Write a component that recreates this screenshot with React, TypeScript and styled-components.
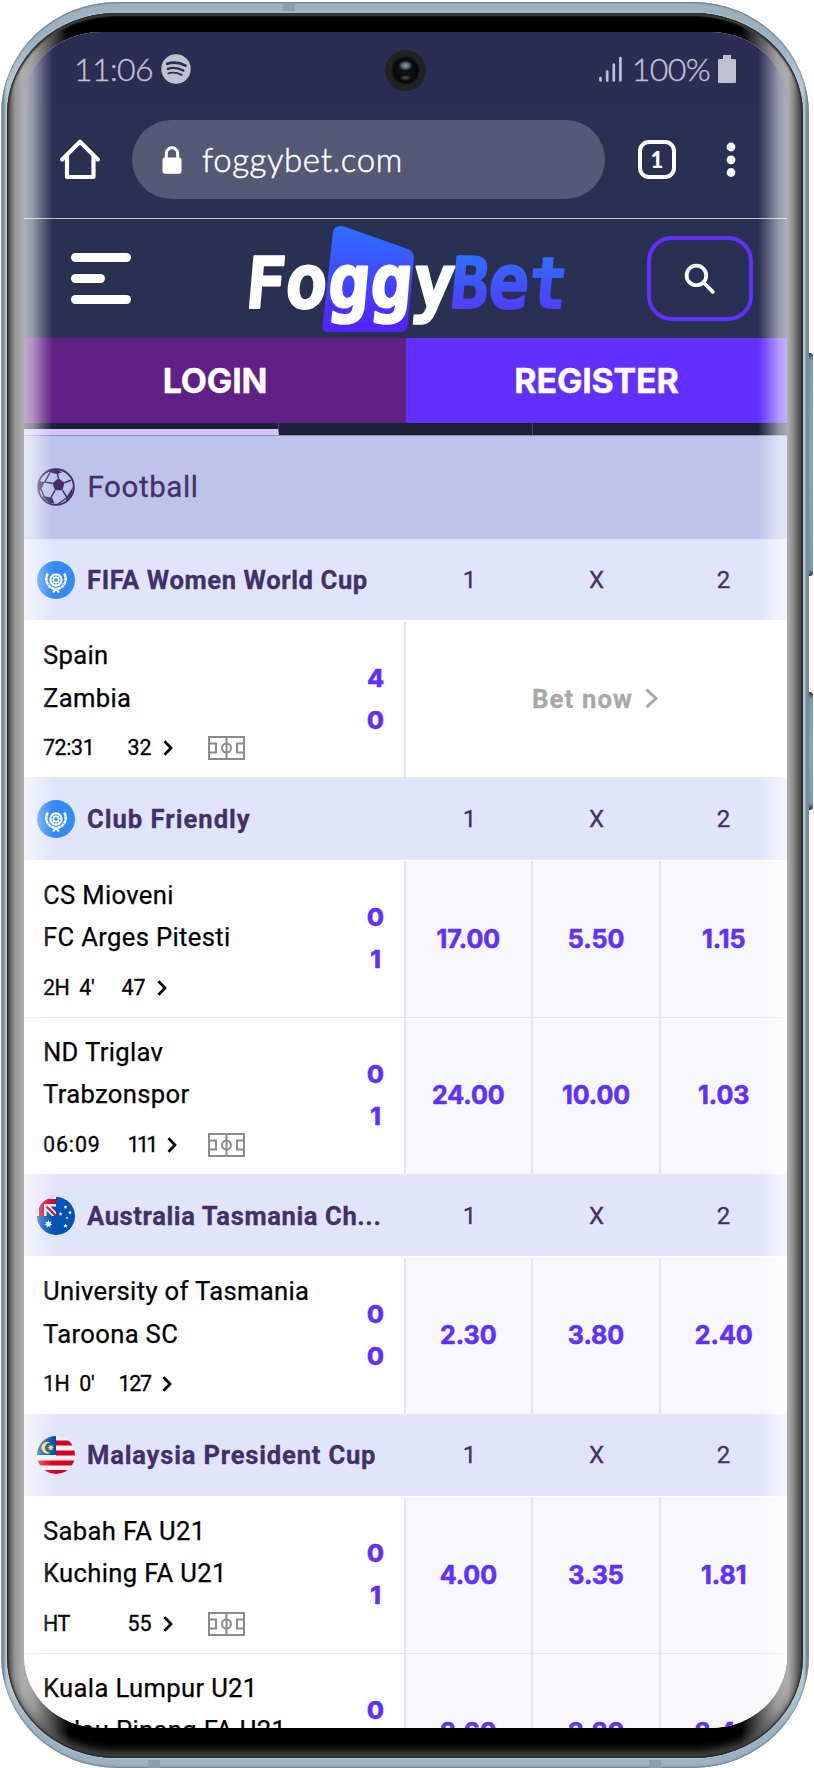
import React from "react";
import styled, { createGlobalStyle } from "styled-components";

const Global = createGlobalStyle`
  *, *::before, *::after { box-sizing: border-box; }
  html, body { margin: 0; padding: 0; background: #fff; }
  body { width: 814px; height: 1768px; overflow: hidden; }
  svg { display: block; flex: none; }
`;

const rubik = `Roboto, "Liberation Sans", sans-serif`;
const inter = `Inter, "Liberation Sans", sans-serif`;
const lato = `Lato, "Open Sans", sans-serif`;

/* ---------- phone body ---------- */

const Stage = styled.main`
  position: relative;
  width: 814px;
  height: 1768px;
  padding: 2px 0 0 1px;
  overflow: hidden;
`;

const Frame = styled.div`
  position: relative;
  width: 808px;
  height: 1766px;
  padding: 11px 6px 10px;
  border-radius: 116px / 112px;
  background: linear-gradient(90deg, #b9ced8 0, #6f8593 2px, #9db3c2 4px, #b4cad6 6px, #9db1bf 30px, #9db1bf 778px, #b4cad6 802px, #9fb7c6 804px, #708797 806px, #8c9aa3 808px);
  box-shadow: inset 0 1px 2px #6d7b86, inset 0 -1px 2px #6d7b86;
`;

const Bezel = styled.div`
  width: 796px;
  height: 1745px;
  padding: 19px 16px 30px 17px;
  border-radius: 109px / 101px;
  background: linear-gradient(90deg, #3c3c3c 0, #707070 4px, #989898 8px, #acacac 16px, #a0a0a0 26px, #5c5c5c 42px, #000 62px, #000 734px, #5c5c5c 754px, #a0a0a0 770px, #acacac 781px, #8e8e8e 786px, #565656 792px, #333 796px);
  box-shadow:
    inset 0 0 2px 1px #222,
    inset 0 3px 2px #4a4a4a,
    inset 0 -9px 9px -2px rgba(84, 84, 84, 0.85),
    0 0 1px 1px rgba(190, 206, 214, 0.6);
`;

const SideKey = styled.i<{ $top: number; $height: number }>`
  position: absolute;
  left: 808px;
  top: ${(p) => p.$top}px;
  width: 5px;
  height: ${(p) => p.$height}px;
  border-radius: 0 3px 3px 0;
  background: linear-gradient(180deg, #333 0, #8298a6 7px, #8fa5b3 50%, #8298a6 calc(100% - 7px), #333 100%);
`;

const Antenna = styled.i<{ $left: number; $bottom?: boolean }>`
  position: absolute;
  left: ${(p) => p.$left}px;
  ${(p) => (p.$bottom ? "bottom: 0;" : "top: 1px;")}
  width: 12px;
  height: 8px;
  background: #8b9eab;
`;

const Screen = styled.section`
  position: relative;
  display: flex;
  flex-direction: column;
  width: 763px;
  height: 1696px;
  overflow: hidden;
  border-radius: 76px / 72px;
  background: #fff;
`;

const EdgeGlow = styled.i<{ $side: "left" | "right" }>`
  position: absolute;
  top: 0;
  bottom: 0;
  ${(p) => p.$side}: 0;
  width: 29px;
  background: linear-gradient(
    to ${(p) => (p.$side === "left" ? "right" : "left")},
    rgba(255, 255, 255, 0.62) 0, rgba(255, 255, 255, 0.5) 30%, rgba(255, 255, 255, 0.16) 75%, rgba(255, 255, 255, 0) 100%);
`;

/* ---------- browser chrome ---------- */

const StatusBar = styled.div`
  display: flex;
  align-items: center;
  flex: none;
  height: 74px;
  padding: 0 51px 0 50px;
  background: #2c2d55;
  color: #c0c1cf;
`;

const StatusText = styled.span`
  margin: 0 8px 0 0;
  font: 300 32px/40px ${lato};
  letter-spacing: -0.6px;
  -webkit-text-stroke: 0.4px #c0c1cf;
`;

const StatusRight = styled.div`
  display: flex;
  align-items: center;
  margin-left: auto;

  svg:first-child { margin-right: 10px; }
`;

const Camera = styled.i`
  position: absolute;
  left: 361px;
  top: 18px;
  width: 41px;
  height: 41px;
  border-radius: 50%;
  background:
    radial-gradient(ellipse 7px 5px at 50% 38%, #8d9ca8 0, #60707c 50%, rgba(40, 45, 50, 0) 100%),
    radial-gradient(ellipse 6px 3px at 50% 68%, #555 0, rgba(30, 30, 30, 0) 100%),
    radial-gradient(circle, #151515 0, #080808 12px, #232323 15px, #222 20px);
`;

const BrowserBar = styled.div`
  display: flex;
  align-items: center;
  flex: none;
  height: 113px;
  padding: 0 51px 5px 36px;
  background: #2a3052;
  border-bottom: 1px solid #c3c3cc;
`;

const AddressField = styled.div`
  display: flex;
  align-items: center;
  width: 473px;
  height: 79px;
  margin: 0 33px 0 32px;
  padding-left: 30px;
  border-radius: 40px;
  background: #555976;
  color: #fff;
`;

const Address = styled.span`
  margin: -2px 0 0 20px;
  font: 300 33px/40px ${lato};
  letter-spacing: 0.6px;
  -webkit-text-stroke: 0.5px #fff;
`;

const TabCount = styled.div`
  display: grid;
  place-items: center;
  width: 38px;
  height: 39px;
  margin-right: 50px;
  border: 4px solid #fff;
  border-radius: 11px;
  color: #fff;
  font: 900 22px/1 ${lato};
`;

/* ---------- site header ---------- */

const SiteHeader = styled.header`
  display: flex;
  align-items: center;
  flex: none;
  height: 119px;
  padding: 0 34px 0 46.5px;
  background: #2a3052;
`;

const Burger = styled.div`
  display: flex;
  flex-direction: column;
  gap: 12.5px;
  width: 60px;
`;

const BurgerLine = styled.i<{ $width: number }>`
  width: ${(p) => p.$width}px;
  height: 8.8px;
  border-radius: 5px;
  background: #fff;
`;

const LogoSvg = styled.svg`
  margin: 0 84.5px 0 117px;
  overflow: visible;
`;

const SearchButton = styled.div`
  display: grid;
  place-items: center;
  width: 106px;
  height: 85px;
  border: 4px solid #6130ff;
  border-radius: 25px;
`;

const AuthRow = styled.div`
  display: grid;
  grid-template-columns: 382px 381px;
  flex: none;
  height: 85px;
`;

const AuthButton = styled.div<{ $bg: string }>`
  display: grid;
  place-items: center;
  background: ${(p) => p.$bg};
  color: #fff;
  font: 700 34px/40px ${inter};
  letter-spacing: -0.2px;
  -webkit-text-stroke: 0.4px #fff;
`;

const TabStrip = styled.div`
  display: grid;
  grid-template-columns: 254.5px 254.5px 1fr;
  flex: none;
  height: 13px;
  border-bottom: 1px solid #8e8fb0;
  background: #1b1f38;
`;

const StripTab = styled.i<{ $active?: boolean }>`
  border-right: 1px solid #444763;
  border-bottom: ${(p) => (p.$active ? "6px solid #d5c3ff" : "0")};
`;

/* ---------- match list ---------- */

const SportBar = styled.div`
  display: flex;
  align-items: center;
  flex: none;
  gap: 12.5px;
  height: 102.8px;
  padding-left: 13px;
  background: #bec3eb;
  color: #43306a;
  font: 400 29.5px/40px ${rubik};
  letter-spacing: 0.6px;
  -webkit-text-stroke: 0.3px #43306a;
`;

const LeagueBar = styled.div`
  display: grid;
  grid-template-columns: 382px repeat(3, 127px);
  align-items: center;
  flex: none;
  height: 81.3px;
  margin-bottom: 1.7px;
  padding-top: 0.5px;
  background: #e1e5fb;
  color: #43306a;
`;

const LeagueName = styled.div<{ $track: number }>`
  display: flex;
  align-items: center;
  gap: 12px;
  padding-left: 13px;
  white-space: nowrap;
  font: 700 25.6px/34px ${rubik};
  letter-spacing: ${(p) => p.$track}px;
  -webkit-text-stroke: 0.3px #43306a;
`;

const Outcome = styled.span`
  text-align: center;
  font: 400 24px/34px ${rubik};
  -webkit-text-stroke: 0.3px #43306a;
`;

const MatchRow = styled.div`
  display: grid;
  grid-template-columns: 379.5px repeat(3, 127.7px);
  flex: none;
  height: 156.7px;
  border-bottom: 1.7px solid #e6e7ea;
`;

const MatchInfo = styled.div`
  display: grid;
  grid-template-columns: 1fr 40px;
  align-content: start;
  padding: 12.5px 8px 0 19px;
`;

const Teams = styled.div`
  display: flex;
  flex-direction: column;
`;

const Team = styled.span<{ $track: number }>`
  height: 42.5px;
  white-space: nowrap;
  color: #000;
  font: 400 25.6px/42.5px ${rubik};
  letter-spacing: ${(p) => p.$track}px;
  -webkit-text-stroke: 0.25px #000;
`;

const Scores = styled.div`
  display: flex;
  flex-direction: column;
  align-items: center;
  padding-top: 22.5px;
  color: #6130ff;
  font: 800 25px/42px ${inter};
  -webkit-text-stroke: 0.3px #6130ff;
`;

const Meta = styled.div`
  display: flex;
  align-items: center;
  height: 34px;
  margin-top: 12px;
  color: #000;
  font: 400 21.4px/34px ${rubik};
  -webkit-text-stroke: 0.3px #000;
`;

const Clock = styled.span<{ $width: number; $track: number }>`
  width: ${(p) => p.$width}px;
  white-space: pre;
  letter-spacing: ${(p) => p.$track}px;
`;

const Markets = styled.span<{ $track: number }>`
  display: flex;
  align-items: center;
  gap: 11px;
  width: 80px;
  letter-spacing: ${(p) => p.$track}px;
`;

const Odd = styled.div`
  display: grid;
  place-items: center;
  padding-bottom: 1px;
  border-left: 2px solid #e4e6ec;
  background: #f8f8fb;
  color: #6130ff;
  font: 700 25px/34px ${inter};
  -webkit-text-stroke: 0.6px #6130ff;
`;

const BetNow = styled.div`
  display: flex;
  grid-column: 2 / 5;
  align-items: center;
  justify-content: center;
  gap: 12px;
  padding: 0 2px 2px 0;
  border-left: 2px solid #e4e6ec;
  color: #a9a9a9;
  font: 700 25.6px/34px ${rubik};
  letter-spacing: 1.2px;
  -webkit-text-stroke: 0.3px #a9a9a9;
`;

/* ---------- icons ---------- */

const SpotifyIcon = () => (
  <svg width="30" height="30" viewBox="0 0 30 30">
    <circle cx="15" cy="15" r="14.7" fill="#c0c1cf" />
    <g fill="none" stroke="#2c2d55" strokeLinecap="round">
      <path d="M6.2 9.8c6-1.8 12.9-1.2 18.3 1.9" strokeWidth="2.7" />
      <path d="M6.8 14.8c5.2-1.5 11-.8 15.6 1.8" strokeWidth="2.3" />
      <path d="M7.3 19.3c4.5-1.2 9.2-.6 13.3 1.6" strokeWidth="1.9" />
    </g>
  </svg>
);

const SignalIcon = () => (
  <svg width="23" height="27" viewBox="0 0 23 27" stroke="#c0c1cf" strokeWidth="2.7" strokeLinecap="round">
    <path d="M1.5 22v2.5M8.2 15.5v9M14.8 8.5v16M21.4 2v22.5" />
  </svg>
);

const BatteryIcon = () => (
  <svg width="18" height="28" viewBox="0 0 18 28" fill="#c0c1cf">
    <path d="M5 0h8v4h4a1 1 0 0 1 1 1v22a1 1 0 0 1-1 1H1a1 1 0 0 1-1-1V5a1 1 0 0 1 1-1h4z" />
  </svg>
);

const HomeIcon = () => (
  <svg width="40" height="41" viewBox="0 0 40 41" fill="none" stroke="#fff" strokeWidth="4.2" strokeLinecap="round" strokeLinejoin="round">
    <path d="M2.2 20.5 20 2.8l17.8 17.7M7 17v21h26.500V17" />
  </svg>
);

const LockIcon = () => (
  <svg width="20" height="28" viewBox="0 0 20 28">
    <path d="M4.3 13V7.5a5.7 5.7 0 0 1 11.4 0V13" fill="none" stroke="#fff" strokeWidth="3" />
    <rect x="0.5" y="11.5" width="19" height="16.2" rx="2.5" fill="#fff" />
  </svg>
);

const DotsIcon = () => (
  <svg width="10" height="36" viewBox="0 0 10 36" fill="#fff">
    <circle cx="5" cy="5" r="4.4" />
    <circle cx="5" cy="17.8" r="4.4" />
    <circle cx="5" cy="30.5" r="4.4" />
  </svg>
);

const SearchIcon = () => (
  <svg width="32" height="32" viewBox="0 0 32 32" fill="none" stroke="#fff" strokeWidth="3.8" strokeLinecap="round">
    <circle cx="12.4" cy="12.4" r="9.8" />
    <path d="M19.5 19.5l9.3 9.3" />
  </svg>
);

const Logo = () => (
  <LogoSvg width="315" height="108" viewBox="248 224 315 108">
    <defs>
      <linearGradient id="tile" x1="0" y1="0" x2="0" y2="1">
        <stop offset="0" stopColor="#2f6fff" />
        <stop offset="1" stopColor="#5320ff" />
      </linearGradient>
      <linearGradient id="bet" gradientUnits="userSpaceOnUse" x1="0" y1="-54" x2="0" y2="0">
        <stop offset="0" stopColor="#2f6fff" />
        <stop offset="1" stopColor="#4f3fff" />
      </linearGradient>
    </defs>
    <path fill="url(#tile)" d="M333 231q1-6 7-6l4 .6 64 22.400q6 2.200 6 9l-6.500 68q-1 6-7 6h-72q-6 0-6-6z" />
    <g fontFamily='"DejaVu Sans Mono", monospace' fontWeight="700" fontSize="71" strokeWidth="2" strokeLinejoin="round">
      <text transform="translate(244 306.700) skewX(-5)" fill="#fff" stroke="#fff" textLength="209" lengthAdjust="spacingAndGlyphs">
        F<tspan fontSize="76">oggy</tspan>
      </text>
      <text transform="translate(449 306.700) skewX(-5)" fill="url(#bet)" stroke="url(#bet)" textLength="116" lengthAdjust="spacingAndGlyphs">
        B<tspan fontSize="76">e</tspan>t
      </text>
    </g>
  </LogoSvg>
);

const FootballIcon = () => (
  <svg width="38" height="38" viewBox="0 0 38 38" fill="#43306a">
    <circle cx="19" cy="19" r="17.8" fill="none" stroke="#43306a" strokeWidth="1.9" />
    <path d="M21.5 10.3l6 4.5-2 7.5h-7.500l-2.500-7z" />
    <path d="M12 2.500l9-.5 4 2.500-5 1.500-6.500-1.500zM2 13l5.500 1-3.500 8-2.500 1zM6 28l9 1.500 2.500 6-5-.5-6-5zM29 30l4-6.500 3-4.500-1.500 8-5.500 6z" />
    <path d="M20.200 5l1.300 5.500M7 14l8.500 1.300M8 13.500l5-9M27.500 14.800l6.500-2.500M25.500 22.300l4.500 7.200M18 22.300l-4 7.200M4 21l3 7.500M21 36l8.500-6" fill="none" stroke="#43306a" strokeWidth="1.5" />
  </svg>
);

const WorldIcon = () => (
  <svg width="38" height="38" viewBox="0 0 38 38" fill="none" stroke="#fff">
    <circle cx="19" cy="19" r="19" fill="#338bf1" stroke="none" />
    <circle cx="19" cy="19" r="5.7" strokeWidth="1.9" />
    <circle cx="19" cy="19" r="2.5" strokeWidth="1.3" />
    <path d="M19 13.500v3.500M19 21v3.500M13.500 19H17M21 19h3.500M15 15l2.500 2.500M20.500 20.500L23 23M23 15l-2.500 2.500M17.500 20.500L15 23" strokeWidth="1.2" />
    <path d="M10.800 12.500c-4 7 .5 14.500 7 15.300M27.200 12.500c4 7-.5 14.500-7 15.300" strokeWidth="2.5" strokeDasharray="3.5 .5" />
    <path d="M16 31.500l3-3.500 3 3.500" strokeWidth="2" />
  </svg>
);

const star = (x: number, y: number, r: number, n: number) =>
  Array.from({ length: n * 2 }, (_, i) => {
    const a = (Math.PI * i) / n - Math.PI / 2;
    const d = i % 2 ? r * 0.48 : r;
    return `${x + d * Math.cos(a)},${y + d * Math.sin(a)}`;
  }).join(" ");

const AustraliaIcon = () => (
  <svg width="38" height="38" viewBox="0 0 38 38">
    <clipPath id="au"><circle cx="19" cy="19" r="19" /></clipPath>
    <g clipPath="url(#au)">
      <path fill="#0052b4" d="M0 0h38v38H0z" />
      <path fill="#f0f0f0" d="M0 0h19v19H0z" />
      <path fill="#d80027" d="M2 2h17v5H7v12H2z" />
      <path fill="#0052b4" d="M9.500 13.500V19H15zM13.500 9.500H19V15z" />
      <path d="M9.500 9.500L19 19" stroke="#d80027" strokeWidth="2.2" />
      <g fill="#f0f0f0">
        <polygon points={star(11.5, 27, 4.2, 7)} />
        <polygon points={star(28.5, 10, 2.1, 5)} />
        <polygon points={star(23.5, 17, 2.1, 5)} />
        <polygon points={star(33, 15.5, 2.1, 5)} />
        <polygon points={star(28.5, 29, 2.3, 5)} />
        <polygon points={star(30, 21, 1.5, 5)} />
      </g>
    </g>
  </svg>
);

const MalaysiaIcon = () => (
  <svg width="38" height="38" viewBox="0 0 38 38">
    <clipPath id="my"><circle cx="19" cy="19" r="19" /></clipPath>
    <g clipPath="url(#my)">
      <path fill="#f0f0f0" d="M0 0h38v38H0z" />
      <path fill="#d80027" d="M19 4.500h19v5H19zM19 14.500h19v5H19zM0 24.500h38v5H0zM0 34h38v4H0z" />
      <path fill="#0052b4" d="M0 0h19v19H0z" />
      <path fill="#ffda44" d="M13.500 6.800a5.800 5.800 0 1 0 0 9.700 4.900 4.900 0 1 1 0-9.700z" />
      <polygon fill="#ffda44" points={star(13.8, 11.7, 3.6, 8)} />
    </g>
  </svg>
);

const PitchIcon = () => (
  <svg width="37" height="24" viewBox="0 0 37 24" fill="none" stroke="#8c8c8c" strokeWidth="2">
    <path d="M1 1h35v22H1zM18.500 1v22M1 7.500h7v9H1M36 7.500h-7v9h7" />
    <circle cx="18.5" cy="12" r="4.5" />
  </svg>
);

const Chevron = ({ size = 10, color = "#000", weight = 2.7 }: { size?: number; color?: string; weight?: number }) => (
  <svg width={size} height={size * 1.6} viewBox={`0 0 ${size} ${size * 1.6}`} fill="none" stroke={color} strokeWidth={weight}>
    <path d={`M1.5 ${size * 0.13}L${size - 2} ${size * 0.8}L1.5 ${size * 1.47}`} />
  </svg>
);

/* ---------- data ---------- */

type Match = {
  teams: [string, string];
  scores: [string, string];
  clock: string;
  clockTrack?: number;
  slot: number;
  markets: string;
  marketsTrack?: number;
  pitch?: boolean;
  odds?: string[];
};

type League = { name: string; track: number; icon: React.ReactNode; matches: Match[] };

const leagues: League[] = [
  {
    name: "FIFA Women World Cup",
    track: 0.6,
    icon: <WorldIcon />,
    matches: [
      { teams: ["Spain", "Zambia"], scores: ["4", "0"], clock: "72:31", slot: 84.5, markets: "32", pitch: true },
    ],
  },
  {
    name: "Club Friendly",
    track: 1,
    icon: <WorldIcon />,
    matches: [
      { teams: ["CS Mioveni", "FC Arges Pitesti"], scores: ["0", "1"], clock: "2H  4'", slot: 78.5, markets: "47", odds: ["17.00", "5.50", "1.15"] },
      { teams: ["ND Triglav", "Trabzonspor"], scores: ["0", "1"], clock: "06:09", clockTrack: 0.9, slot: 84.5, markets: "111", marketsTrack: -2.6, pitch: true, odds: ["24.00", "10.00", "1.03"] },
    ],
  },
  {
    name: "Australia Tasmania Ch...",
    track: 0.6,
    icon: <AustraliaIcon />,
    matches: [
      { teams: ["University of Tasmania", "Taroona SC"], scores: ["0", "0"], clock: "1H  0'", slot: 75.5, markets: "127", marketsTrack: -1.3, odds: ["2.30", "3.80", "2.40"] },
    ],
  },
  {
    name: "Malaysia President Cup",
    track: 0.8,
    icon: <MalaysiaIcon />,
    matches: [
      { teams: ["Sabah FA U21", "Kuching FA U21"], scores: ["0", "1"], clock: "HT", slot: 84.5, markets: "55", pitch: true, odds: ["4.00", "3.35", "1.81"] },
      { teams: ["Kuala Lumpur U21", "Pulau Pinang FA U21"], scores: ["0", "0"], clock: "HT", slot: 84.5, markets: "55", odds: ["2.60", "3.20", "2.40"] },
    ],
  },
];

const MatchItem = ({ match }: { match: Match }) => (
  <MatchRow>
    <MatchInfo>
      <Teams>
        {match.teams.map((team) => (
          <Team key={team} $track={0.35}>{team}</Team>
        ))}
        <Meta>
          <Clock $width={match.slot} $track={match.clockTrack ?? -0.4}>{match.clock}</Clock>
          <Markets $track={match.marketsTrack ?? 0}>
            {match.markets}
            <Chevron />
          </Markets>
          {match.pitch && <PitchIcon />}
        </Meta>
      </Teams>
      <Scores>
        {match.scores.map((score, i) => (
          <span key={i}>{score}</span>
        ))}
      </Scores>
    </MatchInfo>
    {match.odds ? (
      match.odds.map((odd) => <Odd key={odd}>{odd}</Odd>)
    ) : (
      <BetNow>
        Bet now
        <Chevron size={13} color="#a9a9a9" weight={3} />
      </BetNow>
    )}
  </MatchRow>
);

export default function App() {
  return (
    <Stage>
      <Global />
      <SideKey $top={353} $height={223} />
      <SideKey $top={692} $height={118} />
      <Frame>
        <Antenna $left={282} />
        <Antenna $left={147} $bottom />
        <Antenna $left={648} $bottom />
        <Bezel>
          <Screen>
            <StatusBar>
              <StatusText>11:06</StatusText>
              <SpotifyIcon />
              <StatusRight>
                <SignalIcon />
                <StatusText>100%</StatusText>
                <BatteryIcon />
              </StatusRight>
              <Camera />
            </StatusBar>
            <BrowserBar>
              <HomeIcon />
              <AddressField>
                <LockIcon />
                <Address>foggybet.com</Address>
              </AddressField>
              <TabCount>1</TabCount>
              <DotsIcon />
            </BrowserBar>
            <SiteHeader>
              <Burger>
                <BurgerLine $width={60} />
                <BurgerLine $width={34.5} />
                <BurgerLine $width={60} />
              </Burger>
              <Logo />
              <SearchButton>
                <SearchIcon />
              </SearchButton>
            </SiteHeader>
            <AuthRow>
              <AuthButton $bg="#612085">LOGIN</AuthButton>
              <AuthButton $bg="#612fff">REGISTER</AuthButton>
            </AuthRow>
            <TabStrip>
              <StripTab $active />
              <StripTab />
            </TabStrip>
            <SportBar>
              <FootballIcon />
              Football
            </SportBar>
            {leagues.map((league) => (
              <React.Fragment key={league.name}>
                <LeagueBar>
                  <LeagueName $track={league.track}>
                    {league.icon}
                    {league.name}
                  </LeagueName>
                  <Outcome>1</Outcome>
                  <Outcome>X</Outcome>
                  <Outcome>2</Outcome>
                </LeagueBar>
                {league.matches.map((match) => (
                  <MatchItem key={match.teams[0]} match={match} />
                ))}
              </React.Fragment>
            ))}
            <EdgeGlow $side="left" />
            <EdgeGlow $side="right" />
          </Screen>
        </Bezel>
      </Frame>
    </Stage>
  );
}
